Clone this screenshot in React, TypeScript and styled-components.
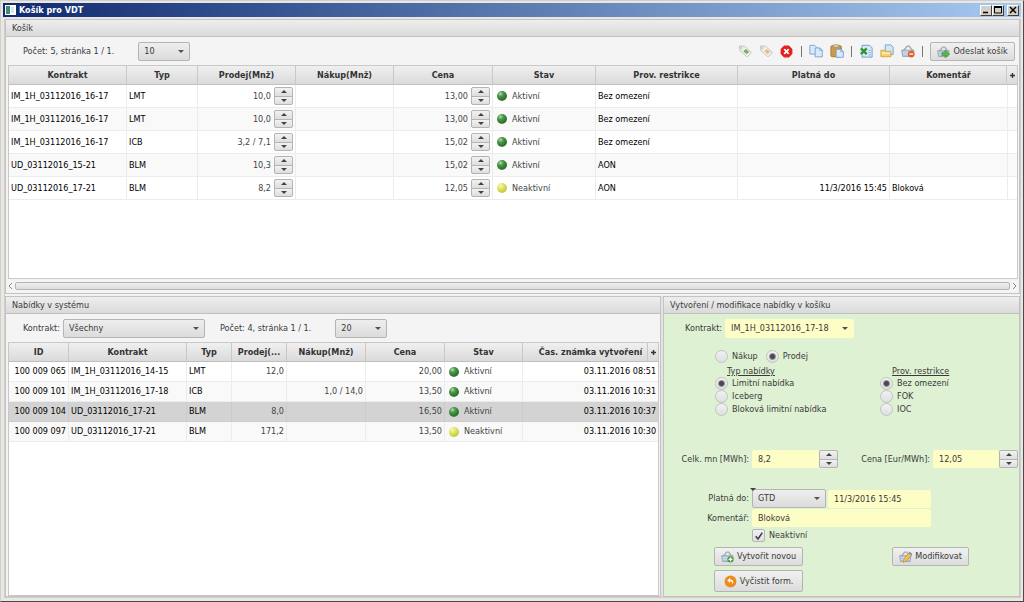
import React from "react";
import styled, { createGlobalStyle, css } from "styled-components";

const GlobalStyle = createGlobalStyle`
  * { box-sizing: border-box; }
  html, body, #root { height: 100%; }
  body {
    margin: 0;
    font-family: "DejaVu Sans Condensed", "DejaVu Sans", sans-serif;
    font-size: 9px;
    line-height: 13px;
    color: #3a3a3a;
    background: #e6e4e0;
  }
  button, input, select { font: inherit; color: inherit; margin: 0; padding: 0; }
`;

/* ---------- window ---------- */

const Window = styled.div`
  min-height: 100%;
  display: flex;
  flex-direction: column;
  padding: 2px 2px 3px 2px;
  background: #e9e7e4;
  border: 1px solid #d2cfca;
  border-right-color: #4a4a4a;
  border-bottom-color: #4a4a4a;
`;

const TitleBar = styled.header`
  flex: none;
  height: 14px;
  display: flex;
  align-items: center;
  gap: 3px;
  padding: 0 2px;
  background: linear-gradient(to right, #0f2a70, #a6caf0);
  color: #fff;
`;

const Title = styled.h1`
  flex: 1;
  margin: 0;
  font-size: 9px;
  line-height: 13px;
`;

const CaptionButton = styled.button<{ $apart?: boolean }>`
  width: 12px;
  height: 11px;
  display: flex;
  align-items: center;
  justify-content: center;
  margin-left: ${(p) => (p.$apart ? "0" : "-3px")};
  background: #d4d0c8;
  border: 1px solid;
  border-color: #fff #404040 #404040 #fff;
`;

const Content = styled.main`
  flex: 1;
  display: flex;
  flex-direction: column;
  gap: 2px;
  margin: 2px 0 0 1px;
  border: 1px solid #d0cecb;
  border-top: 0;
  background: #f3f3f3;
`;

const Lower = styled.div`
  flex: 301 0 0;
  display: flex;
  gap: 2px;
  background: #e4e3e1;
`;

const Panel = styled.section<{ $grow: number; $tinted?: boolean }>`
  flex: ${(p) => p.$grow} 0 0;
  min-width: 0;
  display: flex;
  flex-direction: column;
  background: ${(p) => (p.$tinted ? "#dff1d3" : "#f4f4f4")};
  border: 1px solid #c4c3c1;
`;

const PanelTitle = styled.h2`
  flex: none;
  margin: 0;
  padding: 2px 6px 1px;
  font-size: 9px;
  line-height: 13px;
  font-weight: normal;
  background: linear-gradient(#eeeeee, #dadada);
  border-bottom: 1px solid #c0c0c0;
`;

const ToolRow = styled.div<{ $indent: number }>`
  flex: none;
  height: 28px;
  display: flex;
  align-items: center;
  padding: 0 4px 0 ${(p) => p.$indent}px;
`;

const Tools = styled.div`
  display: flex;
  align-items: center;
  gap: 7px;
  margin-left: auto;
`;

const Separator = styled.span`
  width: 1px;
  height: 11px;
  background: #777;
`;

const IconButton = styled.button`
  width: 14px;
  height: 14px;
  display: block;
  background: none;
  border: 0;
  svg { display: block; }
`;

const PushButton = styled.button<{ $width?: number; $tall?: boolean }>`
  width: ${(p) => (p.$width ? p.$width + "px" : "auto")};
  height: ${(p) => (p.$tall ? 22 : 19)}px;
  display: flex;
  align-items: center;
  justify-content: center;
  gap: 3px;
  white-space: nowrap;
  border: 1px solid #b4b4b4;
  border-radius: 2px;
  background: linear-gradient(#f1f1f1, #dcdcdc);
`;

/* ---------- combo box ---------- */

const ComboFrame = styled.span<{ $width: number; $yellow?: boolean }>`
  position: relative;
  flex: none;
  width: ${(p) => p.$width}px;
  height: 19px;
  &::after {
    content: "";
    position: absolute;
    right: 6px;
    top: 8px;
    border: 3px solid transparent;
    border-top-color: #505050;
    border-bottom-width: 0;
    pointer-events: none;
  }
  select {
    appearance: none;
    display: block;
    width: 100%;
    height: 100%;
    padding: 0 14px 0 5px;
    border-radius: 2px;
    border: 1px solid ${(p) => (p.$yellow ? "#fdfdc6" : "#b4b4b4")};
    background: ${(p) => (p.$yellow ? "#fdfdc6" : "linear-gradient(#eeeeee, #dcdcdc)")};
  }
`;

function Combo(props: { label: string; value: string; width: number; yellow?: boolean; id?: string }) {
  return (
    <ComboFrame $width={props.width} $yellow={props.yellow}>
      <select id={props.id} aria-label={props.label} defaultValue={props.value}>
        <option>{props.value}</option>
      </select>
    </ComboFrame>
  );
}

/* ---------- spinner ---------- */

const Spinner = styled.span`
  flex: none;
  width: 19px;
  height: 18px;
  display: inline-flex;
  flex-direction: column;
  border: 1px solid #b4b4b4;
  border-radius: 2px;
  background: #b4b4b4;
  gap: 1px;
  overflow: hidden;
`;

const Step = styled.button`
  flex: 1;
  min-height: 0;
  display: flex;
  align-items: center;
  justify-content: center;
  border: 0;
  background: linear-gradient(#f2f2f2, #dedede);
`;

function Steps({ name }: { name: string }) {
  return (
    <Spinner>
      <Step type="button" aria-label={`${name}: zvýšit`}>
        <svg width="6" height="3" viewBox="0 0 6 3"><path d="M0 3L3 0l3 3z" fill="#444" /></svg>
      </Step>
      <Step type="button" aria-label={`${name}: snížit`}>
        <svg width="6" height="3" viewBox="0 0 6 3"><path d="M0 0h6L3 3z" fill="#444" /></svg>
      </Step>
    </Spinner>
  );
}

/* ---------- tables ---------- */

const TableFrame = styled.div`
  flex: 1;
  position: relative;
  margin: 0 1px 0 2px;
  background: #fff;
  border: 1px solid #c8c8c8;
`;

const Grid = styled.table<{ $row: number }>`
  width: 100%;
  table-layout: fixed;
  border-collapse: separate;
  border-spacing: 0;
  th {
    height: 19px;
    padding: 0 4px;
    font-weight: bold;
    color: #333;
    background: linear-gradient(#f0f0f0, #dadada);
    border-right: 1px solid #c8c8c8;
    border-bottom: 1px solid #c0c0c0;
    white-space: nowrap;
    overflow: hidden;
    text-overflow: ellipsis;
  }
  th:last-child { border-right: 0; }
  td { height: ${(p) => p.$row}px; }
  td:last-child { border-right: 0; }
`;

const Cell = styled.td<{ $right?: boolean; $dark?: boolean }>`
  padding: 0 2px;
  border-right: 1px solid #ececec;
  border-bottom: 1px solid #ececec;
  white-space: nowrap;
  text-align: ${(p) => (p.$right ? "right" : "left")};
  color: ${(p) => (p.$dark ? "#000" : "#444")};
`;

const Row = styled.tr<{ $selected?: boolean }>`
  &:nth-child(even) { background: #f9f9f9; }
  ${(p) => p.$selected && css`
    && { background: #d3d3d3; }
    ${Cell} { border-color: #cccccc; }
  `}
`;

const Amount = styled.span`
  display: flex;
  align-items: center;
  justify-content: flex-end;
  gap: 3px;
`;

const Status = styled.span`
  display: flex;
  align-items: center;
  gap: 5px;
  padding-left: 2px;
`;

const Lamp = styled.i<{ $on: boolean }>`
  width: 10px;
  height: 10px;
  border-radius: 50%;
  background: ${(p) =>
    p.$on
      ? "radial-gradient(circle at 35% 28%, #b4dcb4 0, #4c994c 28%, #2d702d 65%, #8fba8f 100%)"
      : "radial-gradient(circle at 35% 28%, #f8f8b8 0, #dfe460 35%, #c3cb45 70%, #dfe2a0 100%)"};
`;

const ColumnMenu = styled.button`
  position: absolute;
  top: 0;
  right: 0;
  width: 11px;
  height: 18px;
  display: flex;
  align-items: center;
  justify-content: center;
  border: 0;
  border-left: 1px solid #c8c8c8;
  background: linear-gradient(#f0f0f0, #dadada);
`;

const ScrollBar = styled.div`
  flex: none;
  height: 14px;
  display: flex;
  align-items: center;
  gap: 2px;
  padding: 0 2px;
`;

const ScrollArrow = styled.button`
  width: 5px;
  height: 10px;
  border: 0;
  background: none;
  svg { display: block; }
`;

const Thumb = styled.div`
  flex: 1;
  height: 8px;
  border: 1px solid #b4b4b4;
  border-radius: 2px;
  background: linear-gradient(#eeeeee, #dddddd);
`;

function State({ on }: { on: boolean }) {
  return (
    <Status>
      <Lamp $on={on} />
      {on ? "Aktivní" : "Neaktivní"}
    </Status>
  );
}

function Plus() {
  return (
    <ColumnMenu type="button" aria-label="Sloupce">
      <svg width="5" height="5" viewBox="0 0 5 5"><path d="M2.5 0v5M0 2.5h5" stroke="#333" strokeWidth="1.4" /></svg>
    </ColumnMenu>
  );
}

/* ---------- form ---------- */

const Form = styled.form`
  flex: 1;
  display: flex;
  flex-direction: column;
  padding: 5px 0 3px;
`;

const FormRow = styled.div<{ $top?: number }>`
  flex: none;
  display: flex;
  align-items: center;
  margin-top: ${(p) => p.$top ?? 0}px;
`;

const FieldLabel = styled.label<{ $width: number }>`
  flex: none;
  width: ${(p) => p.$width}px;
  padding-right: 3px;
  text-align: right;
  white-space: nowrap;
`;

const TextField = styled.input<{ $width: number }>`
  width: ${(p) => p.$width}px;
  height: 18px;
  padding: 0 6px;
  border: 0;
  border-radius: 2px;
  background: #fdfdc6;
`;

const Groups = styled.div`
  display: grid;
  grid-template-columns: 165px 1fr;
  padding-left: 51px;
  margin-top: 2px;
`;

const Group = styled.fieldset`
  min-width: 0;
  margin: 0;
  padding: 0;
  border: 0;
  legend {
    padding: 0 0 0 12px;
    line-height: 12px;
    text-decoration: underline;
  }
`;

const Choice = styled.label`
  height: 13px;
  display: flex;
  align-items: center;
  gap: 4px;
`;

const RadioDot = styled.input`
  appearance: none;
  width: 13px;
  height: 13px;
  border-radius: 50%;
  border: 1px solid #bfc4bd;
  background: linear-gradient(#f2f2f4, #dfdfe2);
  &:checked {
    background: radial-gradient(circle, #4a4850 0 2px, transparent 4px), linear-gradient(#f2f2f4, #dfdfe2);
  }
`;

const Direction = styled.div`
  display: flex;
  gap: 8px;
  padding-left: 51px;
  margin-top: 12px;
`;

const TickFrame = styled.span`
  position: relative;
  width: 13px;
  height: 13px;
  input {
    appearance: none;
    display: block;
    width: 13px;
    height: 13px;
    border: 1px solid #b4b8b2;
    border-radius: 2px;
    background: linear-gradient(#f2f2f4, #dfdfe2);
  }
  svg {
    position: absolute;
    left: 3px;
    top: 3px;
    visibility: hidden;
    pointer-events: none;
  }
  input:checked + svg { visibility: visible; }
`;

const Marked = styled.span`
  position: relative;
  display: flex;
  margin-right: 2px;
  > svg { position: absolute; left: -2px; top: -1px; }
`;

const Actions = styled.div`
  display: grid;
  grid-template-columns: 178px 1fr;
  row-gap: 4px;
  padding-left: 50px;
  margin-top: 5px;
`;

function Radio(props: { group: string; label: string; checked?: boolean }) {
  return (
    <Choice>
      <RadioDot type="radio" name={props.group} defaultChecked={props.checked} />
      {props.label}
    </Choice>
  );
}

/* ---------- icons ---------- */

function Icon({ children, size = 14 }: { children: React.ReactNode; size?: number }) {
  return <svg width={size} height={size} viewBox="0 0 16 16" aria-hidden="true">{children}</svg>;
}

function TagIcon({ mark }: { mark: string }) {
  return (
    <Icon>
      <path d="M1.500 2.300L7.500 2.600 14.800 9.300a1 1 0 0 1 0 1.300L11 14.200a1 1 0 0 1-1.300 0L2.300 7.600z" fill="#f2f2ec" stroke="#bdbdb2" />
      <circle cx="4" cy="4.600" r="1" fill="#fff" stroke="#b0b0a8" strokeWidth=".7" />
      <path d="M6 8L9 5.600 12.800 9.100 9.700 11.800z" fill={mark} />
    </Icon>
  );
}

const DeleteIcon = () => (
  <Icon size={13}>
    <path d="M5.300 1.500h5.400l3.800 3.800v5.400l-3.800 3.800H5.300l-3.800-3.800V5.300z" fill="#e61c1c" stroke="#e61c1c" strokeWidth="1.500" strokeLinejoin="round" />
    <path d="M5.200 5.200l5.600 5.600M10.800 5.200l-5.600 5.600" stroke="#fff" strokeWidth="2.200" />
  </Icon>
);

const CopyIcon = () => (
  <Icon>
    <path d="M1 1.500h5.500L9 4v7.500H1z" fill="#dcebfa" stroke="#6f9fd4" />
    <path d="M7 4.500h5.500L15.200 7v7.700H7z" fill="#d9e9fb" stroke="#6f9fd4" />
    <path d="M12.300 4.500V7.300h3" fill="none" stroke="#6f9fd4" strokeWidth=".8" />
  </Icon>
);

const PasteIcon = () => (
  <Icon>
    <rect x="1" y="2" width="12" height="12.500" rx="1.500" fill="#cf9a45" stroke="#a87426" />
    <rect x="4" y=".8" width="6" height="2.800" rx="1" fill="#dcdcd4" stroke="#8d8468" strokeWidth=".8" />
    <path d="M7 6h5.500L15.200 8.500v6.700H7z" fill="#d9e9fb" stroke="#6f9fd4" />
    <path d="M12.300 6v2.700h3" fill="none" stroke="#6f9fd4" strokeWidth=".8" />
  </Icon>
);

const ExcelIcon = () => (
  <Icon>
    <path d="M3.500 1.500h8.500l3 3v10.500H3.500z" fill="#d9e9fb" stroke="#5f97cf" />
    <rect x="1" y="4" width="9" height="8.500" fill="#d8eed8" />
    <path d="M2.200 5l6.600 6.600M8.800 5l-6.600 6.600" stroke="#2f8f42" strokeWidth="2.600" />
    <path d="M11 7.500h2.500M11 10h2.500M11 12.500h2.500" stroke="#86aed8" />
  </Icon>
);

const FolderIcon = () => (
  <Icon>
    <path d="M6 1h6.500L15 3.500V12H6z" fill="#d3e5fa" stroke="#6f9fd4" />
    <path d="M1 7h4l1 1.500h6.500V14.500H1z" fill="#f5cf72" stroke="#d8a23c" />
    <path d="M2 10.500h9.500" stroke="#fff0bd" strokeWidth="1.500" />
  </Icon>
);

function BasketIcon({ children, size }: { children?: React.ReactNode; size?: number }) {
  return (
    <Icon size={size}>
      <path d="M2.500 8L7 2.500h2.500L13.500 8" fill="none" stroke="#a3acb8" strokeWidth="1.600" />
      <path d="M.8 7h14l-1.200 7.200H2z" fill="#b5c6dc" stroke="#8fa0b8" />
      <path d="M2 9.200h11.600M2.300 11.600h11" stroke="#dde6f0" strokeWidth=".8" />
      {children}
    </Icon>
  );
}

const BasketRemove = () => (
  <BasketIcon>
    <circle cx="11.700" cy="11.500" r="3.900" fill="#e2622c" />
    <path d="M9.600 11.500h4.200" stroke="#fff" strokeWidth="1.500" />
  </BasketIcon>
);

const BasketSend = () => (
  <BasketIcon size={13}>
    <path d="M6 9.200h3.900V6.200l5.700 4.900-5.700 4.700v-3H6z" fill="#58b548" stroke="#3d9436" strokeWidth=".8" />
  </BasketIcon>
);

const BasketAdd = () => (
  <BasketIcon size={13}>
    <circle cx="11.700" cy="11.500" r="3.900" fill="#4ca33f" />
    <path d="M9.400 11.500h4.600M11.700 9.200v4.600" stroke="#fff" strokeWidth="1.500" />
  </BasketIcon>
);

const BasketEdit = () => (
  <BasketIcon size={13}>
    <path d="M5 15.200l1-4.200L12.200 3.500l3.200 2.900L9 13.900z" fill="#f4bf4c" stroke="#c88a26" strokeWidth=".8" />
    <path d="M12.200 3.500l1-1.200 3 2.700-.8 1.400z" fill="#4a86d0" />
  </BasketIcon>
);

const ResetIcon = () => (
  <Icon size={13}>
    <circle cx="8" cy="8" r="7.300" fill="#f08a1c" />
    <path d="M7.500 3.500L4 6.700l3.500 3.200V7.800c2.200-.2 3 1 2.200 3.700 3-2.500 2-6-2.200-6z" fill="#fff" />
  </Icon>
);

/* ---------- data ---------- */

type Column = [name: string, width?: number];

type BasketRow = {
  contract: string; type: string; sell: string; price: string;
  active: boolean; restriction: string; until?: string; note?: string;
};

const basketColumns: Column[] = [
  ["Kontrakt", 118], ["Typ", 71], ["Prodej(Mnž)", 98], ["Nákup(Mnž)", 98], ["Cena", 99],
  ["Stav", 103], ["Prov. restrikce", 142], ["Platná do", 152], ["Komentář", 118], [""],
];

const basket: BasketRow[] = [
  { contract: "IM_1H_03112016_16-17", type: "LMT", sell: "10,0", price: "13,00", active: true, restriction: "Bez omezení" },
  { contract: "IM_1H_03112016_16-17", type: "LMT", sell: "10,0", price: "13,00", active: true, restriction: "Bez omezení" },
  { contract: "IM_1H_03112016_16-17", type: "ICB", sell: "3,2 / 7,1", price: "15,02", active: true, restriction: "Bez omezení" },
  { contract: "UD_03112016_15-21", type: "BLM", sell: "10,3", price: "15,02", active: true, restriction: "AON" },
  { contract: "UD_03112016_17-21", type: "BLM", sell: "8,2", price: "12,05", active: false, restriction: "AON", until: "11/3/2016 15:45", note: "Bloková" },
];

const offerColumns: Column[] = [
  ["ID", 60], ["Kontrakt", 118], ["Typ", 45], ["Prodej(...", 55], ["Nákup(Mnž)", 79],
  ["Cena", 79], ["Stav", 78], ["Čas. známka vytvoření"],
];

const offers = [
  { id: "100 009 065", contract: "IM_1H_03112016_14-15", type: "LMT", sell: "12,0", buy: "", price: "20,00", active: true, stamp: "03.11.2016 08:51" },
  { id: "100 009 101", contract: "IM_1H_03112016_17-18", type: "ICB", sell: "", buy: "1,0 / 14,0", price: "13,50", active: true, stamp: "03.11.2016 10:31" },
  { id: "100 009 104", contract: "UD_03112016_17-21", type: "BLM", sell: "8,0", buy: "", price: "16,50", active: true, stamp: "03.11.2016 10:37" },
  { id: "100 009 097", contract: "UD_03112016_17-21", type: "BLM", sell: "171,2", buy: "", price: "13,50", active: false, stamp: "03.11.2016 10:30" },
];

function Columns({ columns }: { columns: Column[] }) {
  return (
    <>
      <colgroup>
        {columns.map(([name, width]) => <col key={name} width={width} />)}
      </colgroup>
      <thead>
        <tr>{columns.map(([name]) => <th key={name} scope="col">{name}</th>)}</tr>
      </thead>
    </>
  );
}

const Count = styled.span<{ $left: number; $right: number }>`
  margin: 0 ${(p) => p.$right}px 0 ${(p) => p.$left}px;
`;

export default function App() {
  return (
    <>
      <GlobalStyle />
      <Window>
        <TitleBar>
          <svg width="11" height="10" viewBox="0 0 11 10" aria-hidden="true">
            <rect width="11" height="10" fill="#fff" />
            <rect x="1" y="1" width="4" height="8" fill="#3d8c74" />
            <rect x="6" y="2" width="3" height="6" fill="#d5e4f2" />
          </svg>
          <Title>Košík pro VDT</Title>
          <CaptionButton aria-label="Minimalizovat">
            <svg width="8" height="8" viewBox="0 0 8 8"><path d="M1 6.500h5" stroke="#000" strokeWidth="1.500" /></svg>
          </CaptionButton>
          <CaptionButton aria-label="Maximalizovat">
            <svg width="8" height="8" viewBox="0 0 8 8"><path d="M.5 1v6h7V1z" fill="none" stroke="#000" /><path d="M0 1h8" stroke="#000" strokeWidth="2" /></svg>
          </CaptionButton>
          <CaptionButton aria-label="Zavřít" $apart>
            <svg width="8" height="8" viewBox="0 0 8 8"><path d="M1 1l6 6M7 1L1 7" stroke="#000" strokeWidth="1.500" /></svg>
          </CaptionButton>
        </TitleBar>

        <Content>
          <Panel $grow={273}>
            <PanelTitle>Košík</PanelTitle>
            <ToolRow $indent={0}>
              <Count $left={17} $right={24}>Počet: 5, stránka 1 / 1.</Count>
              <Combo label="Řádků na stránku" value="10" width={52} />
              <Tools>
                <IconButton aria-label="Aktivovat"><TagIcon mark="#7aab70" /></IconButton>
                <IconButton aria-label="Deaktivovat"><TagIcon mark="#f2b58c" /></IconButton>
                <IconButton aria-label="Smazat"><DeleteIcon /></IconButton>
                <Separator />
                <IconButton aria-label="Kopírovat"><CopyIcon /></IconButton>
                <IconButton aria-label="Vložit"><PasteIcon /></IconButton>
                <Separator />
                <IconButton aria-label="Export"><ExcelIcon /></IconButton>
                <IconButton aria-label="Otevřít"><FolderIcon /></IconButton>
                <IconButton aria-label="Vyprázdnit košík"><BasketRemove /></IconButton>
                <Separator />
                <PushButton $width={85}><BasketSend />Odeslat košík</PushButton>
              </Tools>
            </ToolRow>
            <TableFrame>
              <Grid $row={23}>
                <Columns columns={basketColumns} />
                <tbody>
                  {basket.map((r, i) => (
                    <Row key={i}>
                      <Cell $dark>{r.contract}</Cell>
                      <Cell $dark>{r.type}</Cell>
                      <Cell><Amount>{r.sell}<Steps name="Prodej" /></Amount></Cell>
                      <Cell />
                      <Cell><Amount>{r.price}<Steps name="Cena" /></Amount></Cell>
                      <Cell><State on={r.active} /></Cell>
                      <Cell $dark>{r.restriction}</Cell>
                      <Cell $dark $right>{r.until}</Cell>
                      <Cell $dark>{r.note}</Cell>
                      <Cell />
                    </Row>
                  ))}
                </tbody>
              </Grid>
              <Plus />
            </TableFrame>
            <ScrollBar>
              <ScrollArrow aria-label="Posunout vlevo">
                <svg width="5" height="10" viewBox="0 0 5 10"><path d="M4 2L1 5l3 3" fill="none" stroke="#888" /></svg>
              </ScrollArrow>
              <Thumb />
              <ScrollArrow aria-label="Posunout vpravo">
                <svg width="5" height="10" viewBox="0 0 5 10"><path d="M1 2l3 3-3 3" fill="none" stroke="#888" /></svg>
              </ScrollArrow>
            </ScrollBar>
          </Panel>

          <Lower>
            <Panel $grow={656}>
              <PanelTitle>Nabídky v systému</PanelTitle>
              <ToolRow $indent={9}>
                <FieldLabel $width={48} htmlFor="filter">Kontrakt:</FieldLabel>
                <Combo id="filter" label="Kontrakt" value="Všechny" width={142} />
                <Count $left={15} $right={24}>Počet: 4, stránka 1 / 1.</Count>
                <Combo label="Řádků na stránku" value="20" width={52} />
              </ToolRow>
              <TableFrame>
                <Grid $row={20}>
                  <Columns columns={offerColumns} />
                  <tbody>
                    {offers.map((r, i) => (
                      <Row key={r.id} $selected={i === 2}>
                        <Cell $dark $right>{r.id}</Cell>
                        <Cell $dark>{r.contract}</Cell>
                        <Cell $dark>{r.type}</Cell>
                        <Cell $right>{r.sell}</Cell>
                        <Cell $right>{r.buy}</Cell>
                        <Cell $right>{r.price}</Cell>
                        <Cell><State on={r.active} /></Cell>
                        <Cell $dark $right>{r.stamp}</Cell>
                      </Row>
                    ))}
                  </tbody>
                </Grid>
                <Plus />
              </TableFrame>
            </Panel>

            <Panel $grow={356} $tinted>
              <PanelTitle>Vytvoření / modifikace nabídky v košíku</PanelTitle>
              <Form onSubmit={(e) => e.preventDefault()}>
                <FormRow>
                  <FieldLabel $width={61} htmlFor="contract">Kontrakt:</FieldLabel>
                  <Combo id="contract" label="Kontrakt" value="IM_1H_03112016_17-18" width={129} yellow />
                </FormRow>
                <Direction>
                  <Radio group="direction" label="Nákup" />
                  <Radio group="direction" label="Prodej" checked />
                </Direction>
                <Groups>
                  <Group>
                    <legend>Typ nabídky</legend>
                    <Radio group="kind" label="Limitní nabídka" checked />
                    <Radio group="kind" label="Iceberg" />
                    <Radio group="kind" label="Bloková limitní nabídka" />
                  </Group>
                  <Group>
                    <legend>Prov. restrikce</legend>
                    <Radio group="restriction" label="Bez omezení" checked />
                    <Radio group="restriction" label="FOK" />
                    <Radio group="restriction" label="IOC" />
                  </Group>
                </Groups>
                <FormRow $top={34}>
                  <FieldLabel $width={88} htmlFor="volume">Celk. mn [MWh]:</FieldLabel>
                  <TextField id="volume" $width={67} defaultValue="8,2" />
                  <Steps name="Množství" />
                  <FieldLabel $width={95} htmlFor="price">Cena [Eur/MWh]:</FieldLabel>
                  <TextField id="price" $width={66} defaultValue="12,05" />
                  <Steps name="Cena" />
                </FormRow>
                <FormRow $top={21}>
                  <FieldLabel $width={88} htmlFor="validity">Platná do:</FieldLabel>
                  <Marked>
                    <Combo id="validity" label="Platná do" value="GTD" width={74} />
                    <svg width="6" height="3" viewBox="0 0 6 3"><path d="M0 0h6L3 3z" fill="#444" /></svg>
                  </Marked>
                  <TextField aria-label="Datum platnosti" $width={103} defaultValue="11/3/2016 15:45" />
                </FormRow>
                <FormRow $top={1}>
                  <FieldLabel $width={88} htmlFor="note">Komentář:</FieldLabel>
                  <TextField id="note" $width={179} defaultValue="Bloková" />
                </FormRow>
                <FormRow $top={2}>
                  <FieldLabel as="span" $width={88} />
                  <Choice>
                    <TickFrame>
                      <input type="checkbox" defaultChecked />
                      <svg width="8" height="8" viewBox="0 0 8 8"><path d="M.7 4.300L3 7 7.300.7" fill="none" stroke="#3a3840" strokeWidth="1.500" /></svg>
                    </TickFrame>
                    Neaktivní
                  </Choice>
                </FormRow>
                <Actions>
                  <PushButton type="submit" $width={89}><BasketAdd />Vytvořit novou</PushButton>
                  <PushButton type="button" $width={77}><BasketEdit />Modifikovat</PushButton>
                  <PushButton type="reset" $width={89} $tall><ResetIcon />Vyčistit form.</PushButton>
                </Actions>
              </Form>
            </Panel>
          </Lower>
        </Content>
      </Window>
    </>
  );
}
